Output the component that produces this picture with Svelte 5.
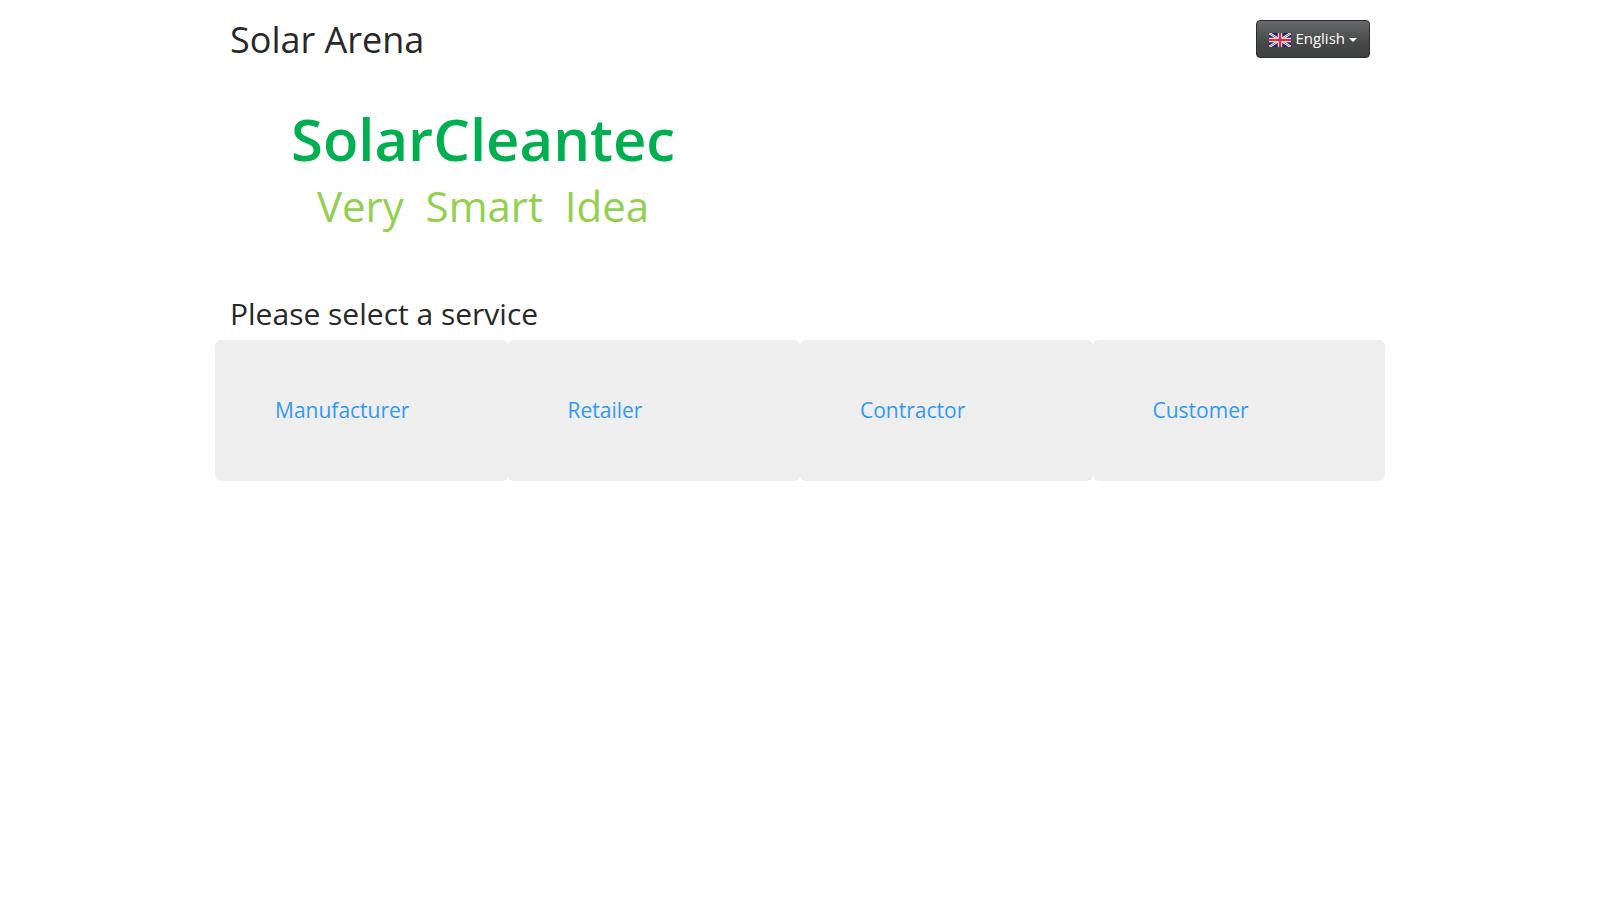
<script>
  const languages = ["English"];
  const services = ["Manufacturer", "Retailer", "Contractor", "Customer"];

  let language = $state(languages[0]);
</script>

<div class="container">
  <header>
    <h1>Solar Arena</h1>
    <button type="button" class="language" aria-haspopup="true">
      <svg class="flag" width="22" height="14" viewBox="0 0 22 14" aria-hidden="true">
        <rect width="22" height="14" fill="#0a2a80" />
        <path d="M0 0 22 14M22 0 0 14" stroke="#fff" stroke-width="2.4" />
        <path d="M0 0 22 14M22 0 0 14" stroke="#d8303f" stroke-width="0.8" />
        <path d="M11 0V14M0 7H22" stroke="#fff" stroke-width="4.4" />
        <path d="M11 0V14M0 7H22" stroke="#d8303f" stroke-width="2.6" />
      </svg>
      <span>{language}</span>
      <span class="caret"></span>
    </button>
  </header>

  <div class="logo">
    <strong>SolarCleantec</strong>
    <span>Very&nbsp; Smart&nbsp; Idea</span>
  </div>

  <h2>Please select a service</h2>
  <nav class="services">
    {#each services as service}
      <div class="service">
        <a href="#{service.toLowerCase()}">{service}</a>
      </div>
    {/each}
  </nav>
</div>

<style>
  :global(body) {
    margin: 0;
    background: #fff;
    color: #282828;
    font-family: "Open Sans", sans-serif;
    font-size: 15px;
  }

  .container {
    max-width: 1170px;
    margin: 0 auto;
  }

  header {
    display: flex;
    justify-content: space-between;
    align-items: flex-start;
    padding: 20px 15px 0;
  }

  h1,
  h2 {
    margin: 0;
    font-weight: 400;
    line-height: 40px;
  }

  h1 {
    font-size: 36px;
  }

  h2 {
    padding: 0 15px;
    margin-bottom: 6px;
    font-size: 30px;
  }

  .language {
    display: flex;
    align-items: center;
    gap: 4px;
    height: 38px;
    padding: 0 12px 2px;
    border: 1px solid #2b2d2d;
    border-radius: 4px;
    background: linear-gradient(#666a6a, #474949 60%, #3d3f3f);
    color: #fff;
    font: inherit;
    line-height: 20px;
    cursor: pointer;
  }

  .flag {
    margin-top: 4px;
  }

  .caret {
    margin-top: 4px;
    border-top: 4px solid #fff;
    border-right: 4px solid transparent;
    border-left: 4px solid transparent;
  }

  .logo {
    display: flex;
    flex-direction: column;
    align-items: center;
    width: fit-content;
    margin: 40px 0 60px 76px;
  }

  .logo strong {
    color: #00b050;
    font-size: 58px;
    font-weight: 600;
    line-height: 78px;
  }

  .logo span {
    color: #92d050;
    font-size: 42px;
    line-height: 56px;
  }

  .services {
    display: grid;
    grid-template-columns: repeat(4, 1fr);
  }

  .service {
    padding: 54px 60px;
    border-radius: 6px;
    background: #eee;
    font-size: 21px;
    line-height: 33px;
  }

  a {
    color: #3399f3;
    text-decoration: none;
  }

  a:hover {
    text-decoration: underline;
  }

  @media (max-width: 767px) {
    .services {
      grid-template-columns: 1fr;
    }

    .logo {
      margin-left: 15px;
    }
  }
</style>
